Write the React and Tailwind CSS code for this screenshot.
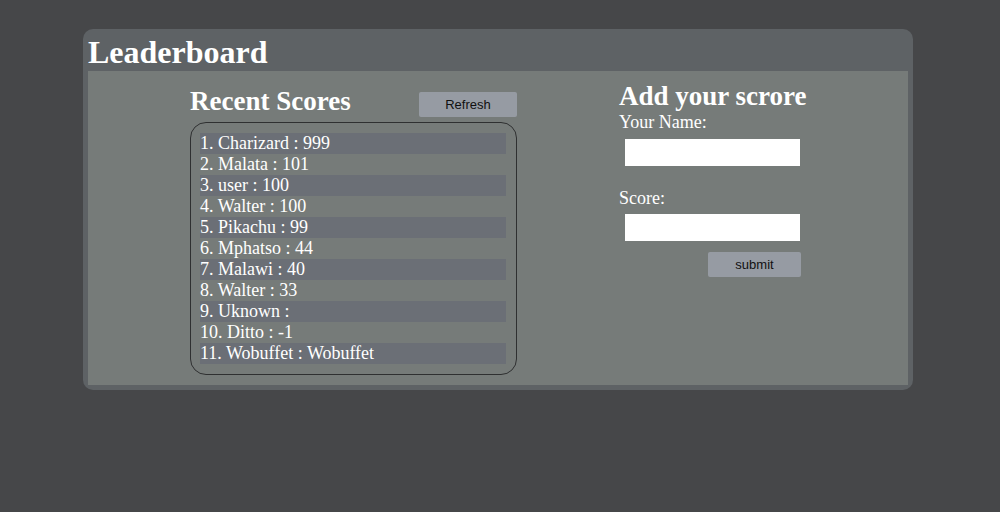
export default function App() {
  const scores = [
    "1. Charizard : 999",
    "2. Malata : 101",
    "3. user : 100",
    "4. Walter : 100",
    "5. Pikachu : 99",
    "6. Mphatso : 44",
    "7. Malawi : 40",
    "8. Walter : 33",
    "9. Uknown :",
    "10. Ditto : -1",
    "11. Wobuffet : Wobuffet",
  ];
  const serif = { fontFamily: '"Liberation Serif", "Times New Roman", serif' };
  const sans = { fontFamily: '"Liberation Sans", Arial, sans-serif' };
  return (
    <div className="h-[512px] w-full bg-[#464749] pt-[29px] pl-[83px]" style={serif}>
      <div className="w-[830px] rounded-[10px] bg-[#5e6265] px-[5px] pb-[5px]">
        <div className="h-[42px]">
          <h1 className="text-[32px] font-bold leading-[46px] text-white">Leaderboard</h1>
        </div>
        <div className="flex h-[314px] items-start bg-[#767b79]">
          <div className="ml-[102px] mt-[15px] w-[327px]">
            <div className="flex items-start justify-between">
              <h2 className="text-[27px] font-bold leading-[30px] text-white">Recent Scores</h2>
              <button
                className="mt-[6px] h-[25px] w-[98px] rounded-[2px] bg-[#969ba3] text-[13px] text-[#111]"
                style={sans}
              >
                Refresh
              </button>
            </div>
            <div className="mt-[5px] rounded-[16px] border border-[#2f3031] pt-[10px] pr-[10px] pb-[10px] pl-[9px]">
              {scores.map((s, i) => (
                <div
                  key={i}
                  className={`h-[21px] text-[18px] leading-[21px] text-white ${i % 2 === 0 ? "bg-[#6b6f76]" : ""}`}
                >
                  {s}
                </div>
              ))}
            </div>
          </div>
          <div className="ml-[102px] mt-[10px] w-[190px]">
            <h2 className="whitespace-nowrap text-[27px] font-bold leading-[30px] text-white">Add your scrore</h2>
            <div className="mt-[1px] text-[18px] leading-[21px] text-white">Your Name:</div>
            <input className="ml-[6px] mt-[6px] block h-[27px] w-[175px] border-0 bg-white outline-none" />
            <div className="mt-[22px] text-[18px] leading-[21px] text-white">Score:</div>
            <input className="ml-[6px] mt-[5px] block h-[27px] w-[175px] border-0 bg-white outline-none" />
            <button
              className="ml-[89px] mt-[11px] block h-[25px] w-[93px] rounded-[2px] bg-[#969ba3] text-[13px] text-[#111]"
              style={sans}
            >
              submit
            </button>
          </div>
        </div>
      </div>
    </div>
  );
}
